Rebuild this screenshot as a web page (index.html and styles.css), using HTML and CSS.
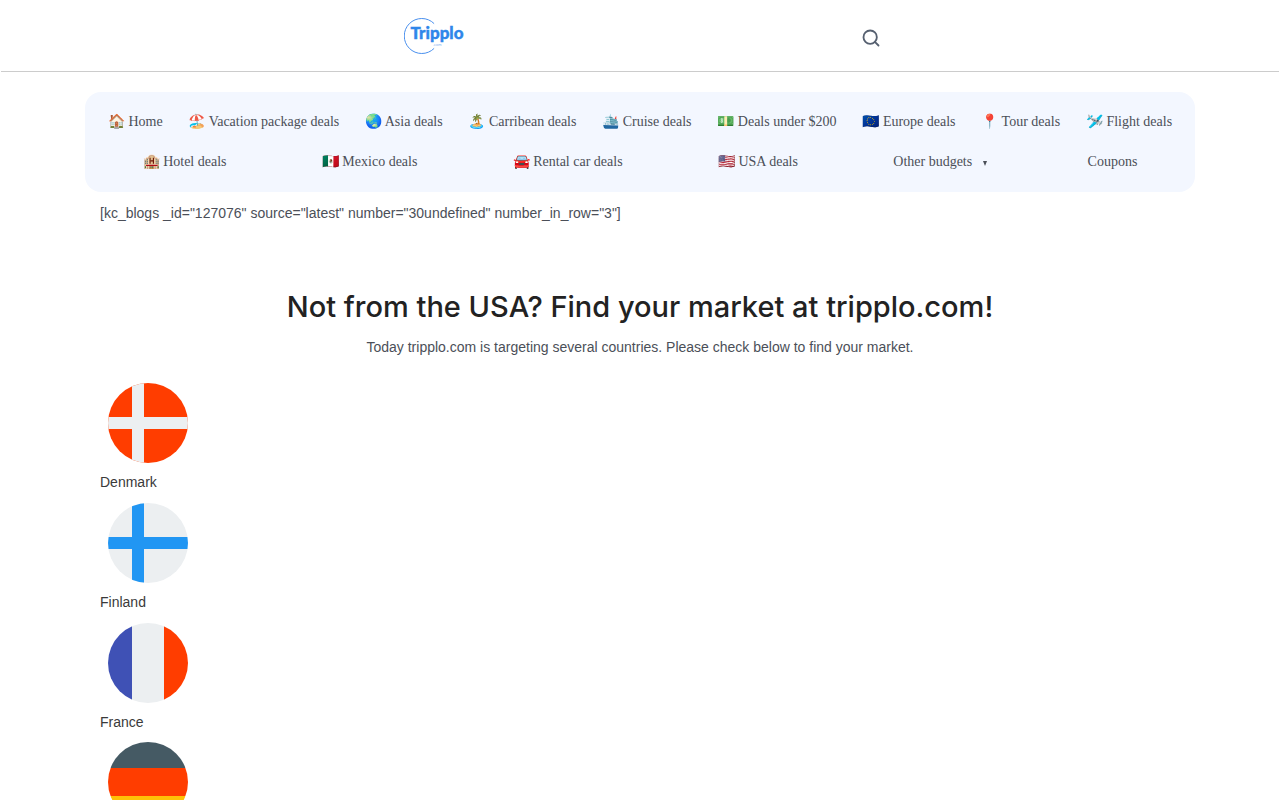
FILE: index.html
```html
<!DOCTYPE html>
<html lang="en">

<head>
    <meta charset="UTF-8">
    <meta name="viewport" content="width=device-width, initial-scale=1.0">
    <title>Tripplo</title>

    <link rel="stylesheet" href="styles.css">
</head>

<body>
    <div class="header">
        <a class="logo" href="#">
            <svg width="62" height="38" viewBox="0 0 62 38">
                <path d="M30.1 6.6 A17.5 17.5 0 1 0 30.1 31.4" fill="none" stroke="#4a90ee" stroke-width="1" />
                <text x="6.5" y="22" class="logo-name">Tripplo</text>
                <text x="29" y="28.5" class="logo-com">.com</text>
            </svg>
        </a>
        <a class="search" href="#">
            <svg width="20" height="20" viewBox="0 0 24 24" fill="none" stroke="#566070" stroke-width="2.2"
                stroke-linecap="round" stroke-linejoin="round">
                <circle cx="11" cy="11" r="8" />
                <line x1="21" y1="21" x2="16.65" y2="16.65" />
            </svg>
        </a>
    </div>

    <div class="wrap">
        <ul class="menu">
            <li><a href="#">🏠 Home</a></li>
            <li><a href="#">🏖️ Vacation package deals</a></li>
            <li><a href="#">🌏 Asia deals</a></li>
            <li><a href="#">🏝️ Carribean deals</a></li>
            <li><a href="#">🛳️ Cruise deals</a></li>
            <li><a href="#">💵 Deals under $200</a></li>
            <li><a href="#">🇪🇺 Europe deals</a></li>
            <li><a href="#">📍 Tour deals</a></li>
            <li><a href="#">🛩️ Flight deals</a></li>
            <li><a href="#">🏨 Hotel deals</a></li>
            <li><a href="#">🇲🇽 Mexico deals</a></li>
            <li><a href="#">🚘 Rental car deals</a></li>
            <li><a href="#">🇺🇸 USA deals</a></li>
            <li><a href="#">Other budgets<span class="caret"></span></a></li>
            <li><a href="#">Coupons</a></li>
        </ul>

        <p class="shortcode">[kc_blogs _id="127076" source="latest" number="30undefined" number_in_row="3"]</p>

        <h2 class="title">Not from the USA? Find your market at tripplo.com!</h2>
        <p class="subtitle">Today tripplo.com is targeting several countries. Please check below to find your market.</p>

        <div class="countries">
            <a class="country" href="#">
                <svg class="flag" viewBox="0 0 80 80">
                    <rect width="80" height="80" fill="#ff3d00" />
                    <rect x="24" width="12" height="80" fill="#eceff1" />
                    <rect y="34" width="80" height="12" fill="#eceff1" />
                </svg>
                <span>Denmark</span>
            </a>
            <a class="country" href="#">
                <svg class="flag" viewBox="0 0 80 80">
                    <rect width="80" height="80" fill="#eceff1" />
                    <rect x="24" width="12" height="80" fill="#2196f3" />
                    <rect y="34" width="80" height="12" fill="#2196f3" />
                </svg>
                <span>Finland</span>
            </a>
            <a class="country" href="#">
                <svg class="flag" viewBox="0 0 80 80">
                    <rect width="24" height="80" fill="#3f51b5" />
                    <rect x="24" width="32" height="80" fill="#eceff1" />
                    <rect x="56" width="24" height="80" fill="#ff3d00" />
                </svg>
                <span>France</span>
            </a>
            <a class="country" href="#">
                <svg class="flag" viewBox="0 0 80 80">
                    <rect width="80" height="26" fill="#455a64" />
                    <rect y="26" width="80" height="28" fill="#ff3d00" />
                    <rect y="54" width="80" height="26" fill="#ffc107" />
                </svg>
                <span>Germany</span>
            </a>
        </div>
    </div>
</body>

</html>
```

FILE: styles.css
```css
* {
    box-sizing: border-box;
}

body {
    margin: 0;
    height: 800px;
    overflow: hidden;
    background-color: #ffffff;
    font-family: "Liberation Sans", Arial, sans-serif;
    font-size: 14px;
    color: #4b4f58;
}

a {
    color: inherit;
    text-decoration: none;
}

.header {
    height: 72px;
    margin: 0 1px;
    padding: 17px 0 0 403px;
    display: flex;
    border-bottom: 1px solid #cccccc;
}

.logo {
    display: block;
    width: 62px;
    height: 38px;
}

.logo-name {
    font-family: Lato, sans-serif;
    font-size: 17px;
    font-weight: 900;
    stroke: #2f86ea;
    stroke-width: 0.4px;
    fill: #2f86ea;
}

.logo-com {
    font-family: "Liberation Sans", sans-serif;
    font-size: 4px;
    fill: #7fb2f0;
}

.search {
    display: block;
    width: 20px;
    height: 20px;
    margin: 11px 0 0 395px;
}

.wrap {
    width: 1110px;
    margin: 20px auto 0;
}

.menu {
    list-style: none;
    margin: 0;
    padding: 10px;
    height: 100px;
    display: flex;
    flex-wrap: wrap;
    background-color: #f3f7ff;
    border-radius: 16px;
    font-family: "Liberation Serif", "Times New Roman", serif;
}

.menu li {
    flex-grow: 1;
    height: 40px;
    padding: 0 12.6px;
    line-height: 40px;
    text-align: center;
    white-space: nowrap;
}

.caret {
    display: inline-block;
    margin: 0 5px 0 11px;
    border-top: 5px solid #4b4f58;
    border-left: 2.5px solid transparent;
    border-right: 2.5px solid transparent;
    vertical-align: 0;
}

.shortcode {
    margin: 13px 0 0;
    padding-left: 15px;
    line-height: 16px;
}

.title {
    margin: 64px 0 0;
    font-family: Inter, sans-serif;
    font-size: 29px;
    font-weight: 500;
    line-height: 44px;
    color: #222222;
    text-align: center;
}

.subtitle {
    margin: 8px 0 0;
    line-height: 20px;
    text-align: center;
}

.countries {
    margin-top: 26px;
    padding-left: 15px;
}

.country {
    display: block;
    height: 119.75px;
    color: #3a3a3a;
}

.country span {
    display: block;
    margin-top: 11px;
    line-height: 16px;
}

.flag {
    display: block;
    width: 80px;
    height: 80px;
    margin-left: 8px;
    border-radius: 50%;
}
```
